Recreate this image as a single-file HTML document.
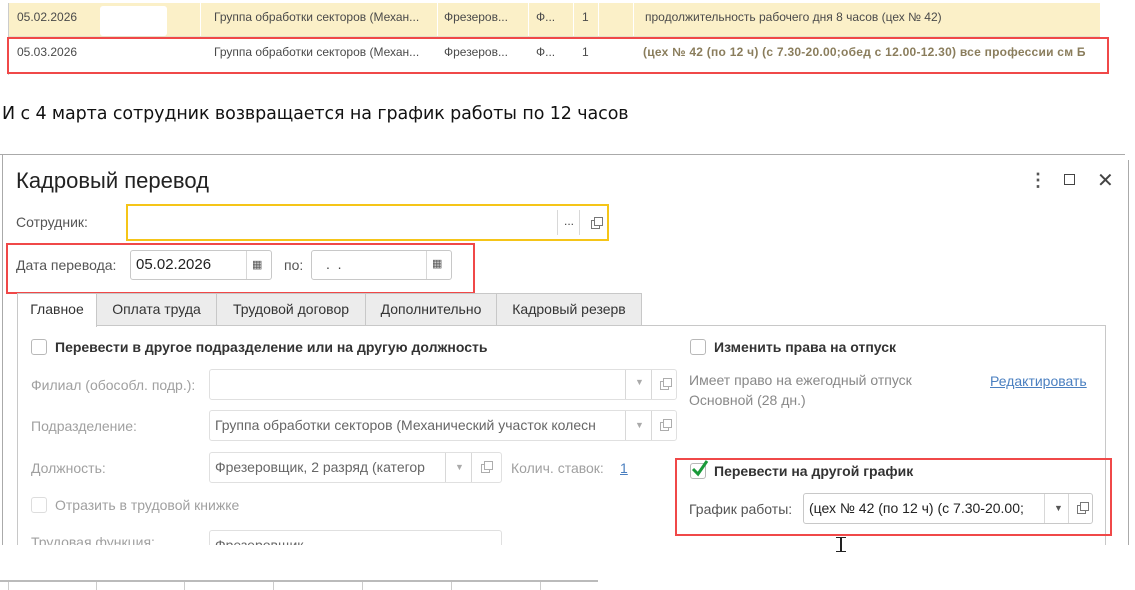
<!DOCTYPE html>
<html><head><meta charset="utf-8"><style>
*{box-sizing:border-box;margin:0;padding:0}
body{width:1135px;height:590px;position:relative;background:#fff;font-family:"Liberation Sans",Arial,sans-serif;overflow:hidden;color:#333}
.a{position:absolute;white-space:nowrap}
.t12{font-size:12px;color:#4a4a4a}
.red{position:absolute;border:2px solid #f04848}
.fld{position:absolute;border:1px solid #c8c8c8;border-radius:3px;background:#fff;font-size:14px;color:#444;padding-left:5px;overflow:hidden}
.sep{position:absolute;top:0;bottom:0;border-left:1px solid #d8d8d8}
.lbl{font-size:14px;color:#555}
.g{color:#a0a0a0}
.cb{position:absolute;width:16px;height:16px;border:1px solid #b8b8b8;border-radius:3px;background:#fff}
.b{font-weight:bold;font-size:14px;color:#333}
.tab{position:absolute;top:293px;height:33px;background:#ececec;border:1px solid #c8c8c8;font-size:14px;color:#333;text-align:center;line-height:30px}
.cp{position:absolute;width:9px;height:9px;border:1px solid #777}
.cp:before{content:"";position:absolute;left:2px;top:-4px;width:7px;height:7px;border:1px solid #777;background:#fff}
</style></head><body>
<div class="a" style="left:8px;top:3px;width:1092px;height:33px;background:#fbf0c8"></div>
<div class="a" style="left:100px;top:6px;width:67px;height:30px;background:#fff;border-radius:3px"></div>
<div class="a" style="left:8px;top:36px;width:1092px;height:1px;background:#e6e0c8"></div>
<div class="a" style="left:8px;top:3px;width:1px;height:72px;background:#ccc"></div>
<div class="a" style="left:200px;top:3px;width:1px;height:33px;background:#fff"></div>
<div class="a" style="left:437px;top:3px;width:1px;height:33px;background:#fff"></div>
<div class="a" style="left:528px;top:3px;width:1px;height:33px;background:#fff"></div>
<div class="a" style="left:573px;top:3px;width:1px;height:33px;background:#fff"></div>
<div class="a" style="left:598px;top:3px;width:1px;height:33px;background:#fff"></div>
<div class="a" style="left:633px;top:3px;width:1px;height:33px;background:#fff"></div>
<div class="a t12" style="left:17px;top:10px">05.02.2026</div>
<div class="a t12" style="left:214px;top:10px">Группа обработки секторов (Механ...</div>
<div class="a t12" style="left:444px;top:10px">Фрезеров...</div>
<div class="a t12" style="left:536px;top:10px">Ф...</div>
<div class="a t12" style="left:582px;top:10px">1</div>
<div class="a t12" style="left:645px;top:10px">продолжительность рабочего дня 8 часов (цех № 42)</div>
<div class="a t12" style="left:17px;top:45px">05.03.2026</div>
<div class="a t12" style="left:214px;top:45px">Группа обработки секторов (Механ...</div>
<div class="a t12" style="left:444px;top:45px">Фрезеров...</div>
<div class="a t12" style="left:536px;top:45px">Ф...</div>
<div class="a t12" style="left:582px;top:45px">1</div>
<div class="a t12" style="left:643px;top:45px;font-weight:bold;color:#8a7d5c;letter-spacing:0.25px">(цех № 42 (по 12 ч) (с 7.30-20.00;обед с 12.00-12.30) все профессии см Б</div>
<div class="red" style="left:7px;top:37px;width:1102px;height:37px"></div>
<div class="a" style="left:2px;top:104px;font-size:17.5px;color:#111;font-family:'DejaVu Sans',sans-serif;letter-spacing:-0.1px">И с 4 марта сотрудник возвращается на график работы по 12 часов</div>
<div class="a" style="left:0;top:154px;width:1125px;height:1px;background:#aaa"></div>
<div class="a" style="left:2px;top:154px;width:1px;height:391px;background:#aaa"></div>
<div class="a" style="left:1128px;top:160px;width:1px;height:385px;background:#aaa"></div>
<div class="a" style="left:16px;top:168px;font-size:22px;color:#222">Кадровый перевод</div>
<div class="a" style="left:1029px;top:170px;font-size:18px;color:#555;font-weight:bold">⋮</div>
<div class="a" style="left:1064px;top:174px;width:11px;height:11px;border:1.5px solid #444"></div>
<div class="a" style="left:1097px;top:168px;font-size:20px;color:#444">✕</div>
<div class="a lbl" style="left:16px;top:214px">Сотрудник:</div>
<div class="fld" style="left:126px;top:204px;width:483px;height:37px;border:2px solid #f5c518;border-radius:0">
<div class="sep" style="left:429px;top:4px;bottom:4px"></div><div class="a" style="left:436px;top:8px;font-size:12px">...</div><div class="sep" style="left:451px;top:4px;bottom:4px"></div><div class="cp" style="left:463px;top:14px"></div></div>
<div class="a lbl" style="left:16px;top:257px">Дата перевода:</div>
<div class="fld" style="left:130px;top:250px;width:142px;height:30px;line-height:28px;font-size:15px;color:#222">05.02.2026<div class="sep" style="left:115px"></div><div class="a" style="left:121px;top:0;font-size:11px;color:#555">▦</div></div>
<div class="a lbl" style="left:284px;top:257px">по:</div>
<div class="fld" style="left:311px;top:250px;width:141px;height:30px;line-height:26px;padding-left:14px">.&nbsp;&nbsp;.<div class="sep" style="left:114px"></div><div class="a" style="left:120px;top:0;font-size:11px;color:#555">▦</div></div>
<div class="red" style="left:6px;top:243px;width:469px;height:51px"></div>
<div class="tab" style="left:96px;width:121px">Оплата труда</div>
<div class="tab" style="left:216px;width:150px">Трудовой договор</div>
<div class="tab" style="left:365px;width:132px">Дополнительно</div>
<div class="tab" style="left:496px;width:146px">Кадровый резерв</div>
<div class="a" style="left:17px;top:325px;width:1089px;height:230px;border:1px solid #c8c8c8"></div>
<div class="tab" style="left:17px;width:80px;background:#fff;border-bottom:none;height:34px">Главное</div>
<div class="cb" style="left:31px;top:339px"></div>
<div class="a b" style="left:55px;top:339px">Перевести в другое подразделение или на другую должность</div>
<div class="a lbl g" style="left:31px;top:377px">Филиал (обособл. подр.):</div>
<div class="fld" style="left:209px;top:369px;width:468px;height:31px;border-color:#e0e0e0"><div class="sep" style="left:415px"></div><div class="a" style="left:425px;top:7px;font-size:9px;color:#aaa">▼</div><div class="sep" style="left:441px"></div><div class="cp" style="left:450px;top:11px;opacity:.6"></div></div>
<div class="a lbl g" style="left:31px;top:418px">Подразделение:</div>
<div class="fld" style="left:209px;top:410px;width:468px;height:31px;line-height:29px;color:#666;border-color:#e0e0e0">Группа обработки секторов (Механический участок колесн<div class="sep" style="left:415px"></div><div class="a" style="left:425px;top:0;font-size:9px;color:#aaa">▼</div><div class="sep" style="left:441px"></div><div class="cp" style="left:450px;top:11px;opacity:.6"></div></div>
<div class="a lbl g" style="left:31px;top:460px">Должность:</div>
<div class="fld" style="left:209px;top:452px;width:293px;height:31px;line-height:29px;color:#666;border-color:#e0e0e0">Фрезеровщик, 2 разряд (категор<div class="sep" style="left:235px"></div><div class="a" style="left:245px;top:0;font-size:9px;color:#aaa">▼</div><div class="sep" style="left:261px"></div><div class="cp" style="left:271px;top:11px;opacity:.6"></div></div>
<div class="a lbl g" style="left:511px;top:460px">Колич. ставок:</div>
<div class="a lbl" style="left:620px;top:460px;color:#4a7fc0;text-decoration:underline">1</div>
<div class="cb" style="left:31px;top:497px;border-color:#ddd"></div>
<div class="a lbl g" style="left:55px;top:497px">Отразить в трудовой книжке</div>
<div class="a lbl g" style="left:31px;top:534px">Трудовая функция:</div>
<div class="fld" style="left:209px;top:530px;width:293px;height:31px;line-height:29px;color:#666;border-color:#e0e0e0">Фрезеровщик</div>
<div class="cb" style="left:690px;top:339px"></div>
<div class="a b" style="left:714px;top:339px">Изменить права на отпуск</div>
<div class="a lbl" style="left:689px;top:372px;color:#888">Имеет право на ежегодный отпуск</div>
<div class="a lbl" style="left:689px;top:392px;color:#888">Основной (28 дн.)</div>
<div class="a lbl" style="left:990px;top:373px;color:#4a7fc0;text-decoration:underline">Редактировать</div>
<div class="cb" style="left:690px;top:463px"></div>
<svg class="a" style="left:690px;top:458px" width="20" height="20" viewBox="0 0 20 20"><path d="M3 11 L8 16 L17 3" fill="none" stroke="#1a9a3a" stroke-width="3"/></svg>
<div class="a b" style="left:714px;top:463px">Перевести на другой график</div>
<div class="a lbl" style="left:689px;top:501px">График работы:</div>
<div class="fld" style="left:803px;top:493px;width:290px;height:31px;line-height:29px;color:#222">(цех № 42 (по 12 ч) (с 7.30-20.00;<div class="sep" style="left:240px"></div><div class="a" style="left:250px;top:0;font-size:9px;color:#555">▼</div><div class="sep" style="left:264px"></div><div class="cp" style="left:273px;top:11px"></div></div>
<div class="red" style="left:675px;top:458px;width:437px;height:78px"></div>
<div class="a" style="left:0;top:545px;width:1135px;height:45px;background:#fff"></div>
<div class="a" style="left:840px;top:537px;width:2px;height:15px;background:#222"></div>
<div class="a" style="left:836px;top:537px;width:10px;height:1px;background:#222"></div>
<div class="a" style="left:836px;top:551px;width:10px;height:1px;background:#222"></div>
<div class="a" style="left:0;top:580px;width:598px;height:2px;background:#bbb"></div>
<div class="a" style="left:8px;top:582px;width:590px;height:8px;border-left:1px solid #ccc"></div>
<div class="a" style="left:96px;top:582px;width:1px;height:8px;background:#ccc"></div>
<div class="a" style="left:184px;top:582px;width:1px;height:8px;background:#ccc"></div>
<div class="a" style="left:273px;top:582px;width:1px;height:8px;background:#ccc"></div>
<div class="a" style="left:362px;top:582px;width:1px;height:8px;background:#ccc"></div>
<div class="a" style="left:451px;top:582px;width:1px;height:8px;background:#ccc"></div>
<div class="a" style="left:540px;top:582px;width:1px;height:8px;background:#ccc"></div>
</body></html>
